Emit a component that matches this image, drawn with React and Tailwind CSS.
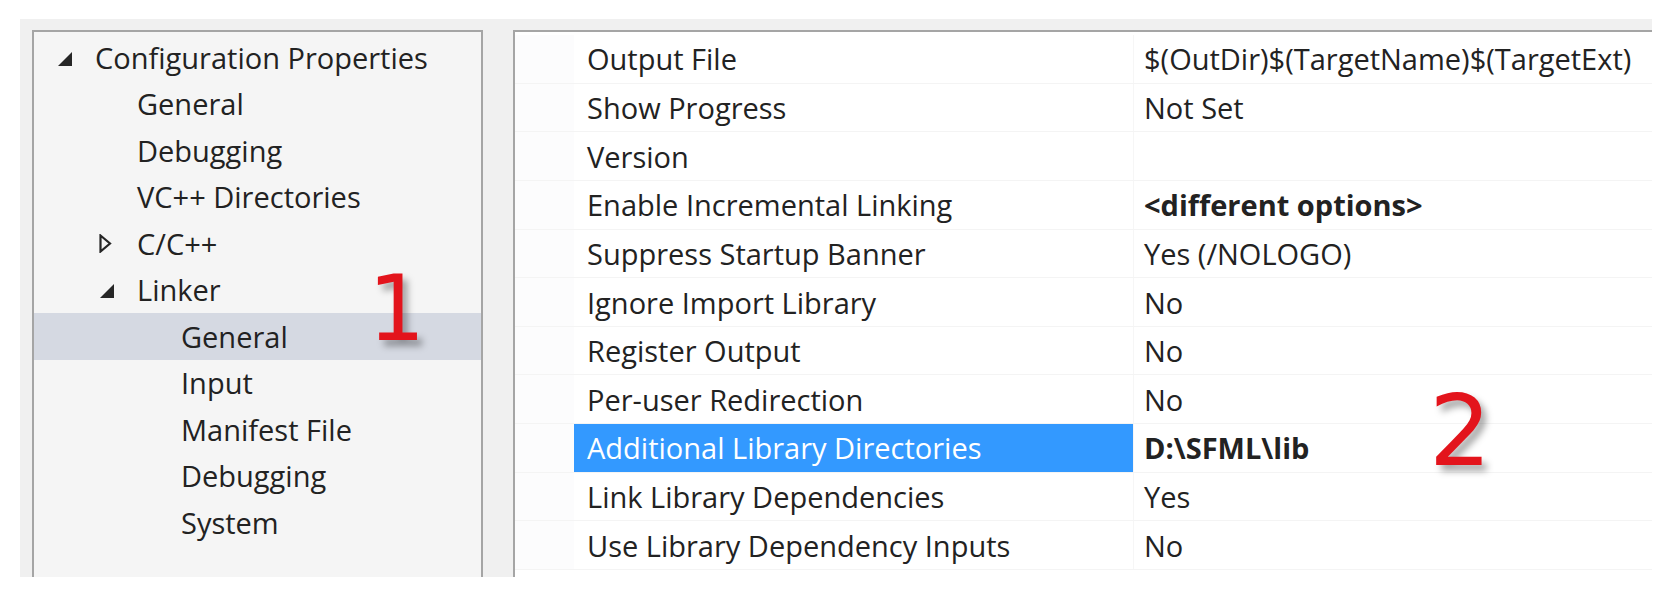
import React from 'react';

const tree = [
  { label: 'Configuration Properties', level: 0, icon: 'open' },
  { label: 'General', level: 1 },
  { label: 'Debugging', level: 1 },
  { label: 'VC++ Directories', level: 1 },
  { label: 'C/C++', level: 1, icon: 'closed' },
  { label: 'Linker', level: 1, icon: 'open' },
  { label: 'General', level: 2, selected: true },
  { label: 'Input', level: 2 },
  { label: 'Manifest File', level: 2 },
  { label: 'Debugging', level: 2 },
  { label: 'System', level: 2 },
];

const indent = ['pl-[19px]', 'pl-[61px]', 'pl-[105px]'];

const props = [
  ['Output File', '$(OutDir)$(TargetName)$(TargetExt)'],
  ['Show Progress', 'Not Set'],
  ['Version', ''],
  ['Enable Incremental Linking', '<different options>', true],
  ['Suppress Startup Banner', 'Yes (/NOLOGO)'],
  ['Ignore Import Library', 'No'],
  ['Register Output', 'No'],
  ['Per-user Redirection', 'No'],
  ['Additional Library Directories', 'D:\\SFML\\lib', true, true],
  ['Link Library Dependencies', 'Yes'],
  ['Use Library Dependency Inputs', 'No'],
];

function Arrow({ type }) {
  if (type === 'open') {
    return (
      <svg width="16" height="16" viewBox="0 0 16 16" className="shrink-0 mt-[3px]">
        <path d="M15 1 L15 15 L1 15 Z" fill="#262626" />
      </svg>
    );
  }
  return (
    <svg width="13" height="19" viewBox="0 0 13 19" className="shrink-0">
      <path d="M1.5 1.5 L11 9.5 L1.5 17.5 Z" fill="none" stroke="#262626" strokeWidth="2.2" strokeLinejoin="miter" />
    </svg>
  );
}

function TreeRow({ item }) {
  return (
    <div
      className={`flex items-center h-[46.5px] ${indent[item.level]} ${
        item.selected ? 'bg-[#d5d9e2]' : ''
      }`}
    >
      <div className="w-[42px] shrink-0 flex items-center pl-[4px]">
        {item.icon && <Arrow type={item.icon} />}
      </div>
      <span className="text-[#222]">{item.label}</span>
    </div>
  );
}

function PropRow({ name, value, bold, selected }) {
  return (
    <div className="flex h-[48.65px] border-b border-[#f4f4f4]">
      <div className="w-[59px] bg-[#fcfcfd]" />
      <div
        className={`w-[559px] flex items-center pl-[13px] ${
          selected ? 'bg-[#3399ff] text-white' : 'text-[#222]'
        }`}
      >
        {name}
      </div>
      <div
        className={`flex-1 flex items-center pl-[10px] border-l border-[#f6f6f6] text-[#222] ${
          bold ? 'font-bold' : ''
        }`}
      >
        {value}
      </div>
    </div>
  );
}

export default function App() {
  return (
    <div className="relative w-[1662px] h-[600px] bg-white pt-[19px] pl-[20px] font-['Open_Sans',sans-serif] text-[29px] leading-none">
      <div className="flex w-[1632px] h-[558px] bg-[#f0f0f0] pt-[11px] pl-[12px]">
        <div className="w-[451px] h-full border-t-2 border-l-2 border-r-2 border-[#a5a5a5] bg-[#f5f5f5] pt-[2px]">
          {tree.map((item, i) => (
            <TreeRow key={i} item={item} />
          ))}
        </div>
        <div className="ml-[30px] flex-1 h-full border-t-2 border-l-2 border-[#a5a5a5] bg-white pt-[3px] overflow-hidden">
          {props.map(([name, value, bold, selected], i) => (
            <PropRow key={i} name={name} value={value} bold={bold} selected={selected} />
          ))}
        </div>
      </div>

      {/* callout numbers */}
      <span className="absolute left-[368px] top-[264px] font-['DejaVu_Sans',sans-serif] text-[90px] leading-none text-[#e3141c] [text-shadow:5px_6px_7px_rgba(0,0,0,0.35)]">
        1
      </span>
      <span className="absolute left-[1429px] top-[382px] font-['DejaVu_Sans',sans-serif] text-[98px] leading-none text-[#e3141c] [text-shadow:5px_6px_7px_rgba(0,0,0,0.35)]">
        2
      </span>
    </div>
  );
}
